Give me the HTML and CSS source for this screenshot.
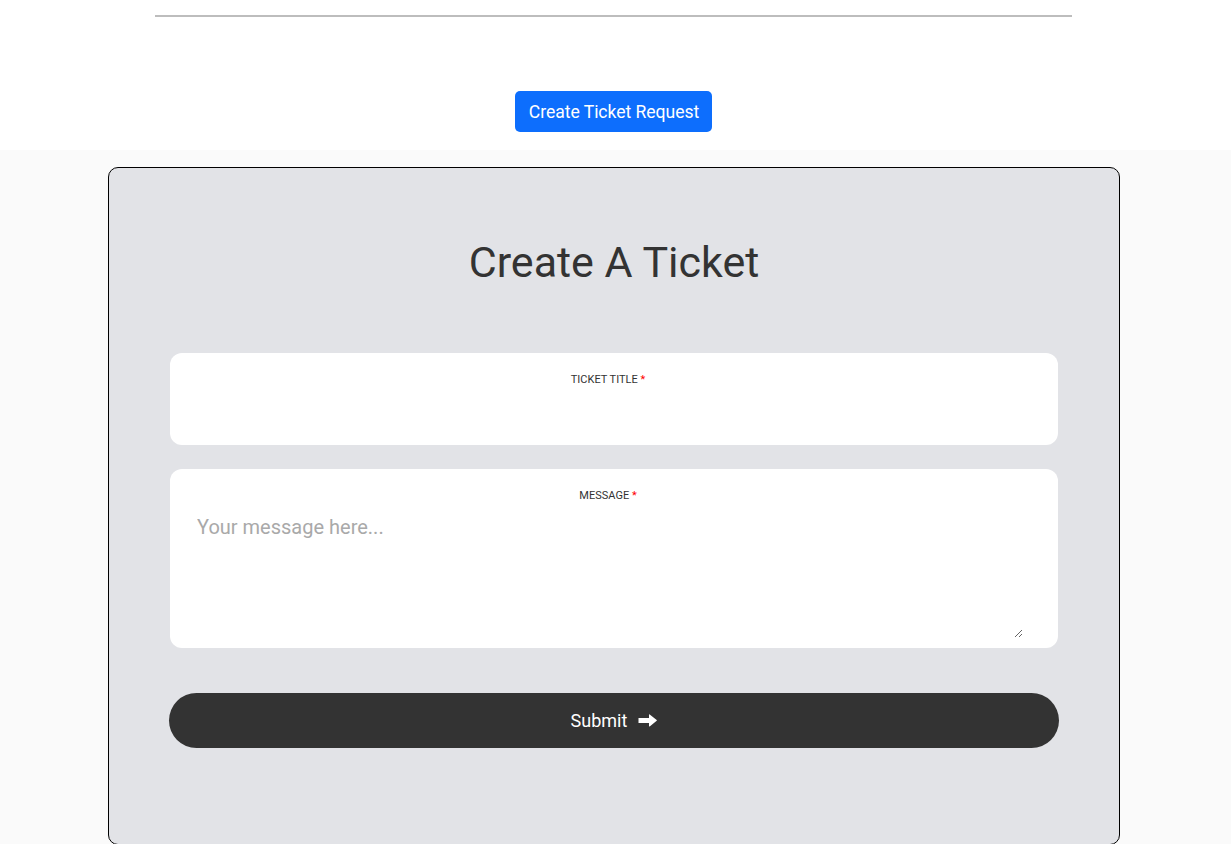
FILE: index.html
```html
<!DOCTYPE html>
<html lang="en">
<head>
<meta charset="utf-8">
<title>Create A Ticket</title>
<link rel="stylesheet" href="styles.css">
</head>
<body>
<header class="top">
  <div class="rule"></div>
  <button class="btn-primary" type="button">Create Ticket Request</button>
</header>
<main class="stage">
  <section class="card">
    <h1 class="card-title">Create A Ticket</h1>
    <form class="ticket-form">
      <div class="field field-title">
        <label class="field-label" for="title">TICKET TITLE <span class="req">*</span></label>
        <input class="field-input" id="title" type="text">
      </div>
      <div class="field field-message">
        <label class="field-label" for="msg">MESSAGE <span class="req">*</span></label>
        <textarea class="field-textarea" id="msg" placeholder="Your message here..."></textarea>
      </div>
      <button class="btn-submit" type="button">Submit
        <svg class="arrow" width="19" height="13" viewBox="0 0 19 13" aria-hidden="true"><path d="M0.5 4h10.5V0.8c0-0.4 0.4-0.6 0.7-0.4l7 5.6c0.3 0.2 0.3 0.6 0 0.8l-7 5.6c-0.3 0.2-0.7 0-0.7-0.4V9H0.5z" fill="#fff"/></svg>
      </button>
    </form>
  </section>
</main>
</body>
</html>
```
FILE: styles.css
```css
* { box-sizing: border-box; }
html, body { margin: 0; padding: 0; }
body {
  font-family: Roboto, "Liberation Sans", Arial, sans-serif;
  background: #fafafa;
  color: #333;
  overflow: hidden;
  height: 844px;
}
.top {
  background: #fff;
  height: 150px;
  display: flex;
  flex-direction: column;
  align-items: center;
  padding-top: 15px;
}
.rule {
  width: 917px;
  height: 2px;
  background: #bdbdbd;
  margin-right: 5px;
}
.btn-primary {
  margin-top: 74px;
  margin-right: 4px;
  height: 41px;
  padding: 0 13px 0 14px;
  border: none;
  border-radius: 5px;
  background: #0d6efd;
  color: #fff;
  font-family: Roboto, "Liberation Sans", Arial, sans-serif;
  font-size: 17.6px;
  letter-spacing: -0.05px;
}
.stage {
  padding-top: 17px;
  padding-right: 3px;
}
.card {
  width: 1012px;
  margin: 0 auto;
  background: #e2e3e7;
  border: 1px solid #000;
  border-radius: 10px;
  padding: 69px 61px 96px;
}
.card-title {
  margin: 0;
  text-align: center;
  font-size: 43px;
  line-height: 51px;
  font-weight: 400;
  color: #333;
}
.ticket-form {
  margin-top: 65px;
  display: flex;
  flex-direction: column;
}
.field {
  background: #fff;
  border-radius: 12px;
  display: flex;
  flex-direction: column;
  padding: 20px 27px 0;
}
.field + .field { margin-top: 24px; }
.field-message { padding-bottom: 10px; padding-right: 35px; }
.field-label {
  text-align: center;
  font-size: 11px;
  line-height: 13px;
  color: #333;
  padding-right: 12px;
}
.field-message .field-label { padding-right: 4px; }
.req { color: #ff0000; }
.field-input {
  border: none;
  outline: none;
  height: 59px;
  font-family: inherit;
  font-size: 20px;
  background: transparent;
}
.field-textarea {
  margin-top: 13px;
  height: 123px;
  border: none;
  outline: none;
  padding: 0;
  resize: vertical;
  font-family: Roboto, "Liberation Sans", Arial, sans-serif;
  font-size: 20px;
  color: #333;
  background: transparent;
}
.field-textarea::placeholder { color: #a9a9a9; }
.btn-submit {
  margin: 45px -1px 0;
  height: 55px;
  border: none;
  border-radius: 28px;
  background: #333;
  color: #fff;
  font-family: Roboto, "Liberation Sans", Arial, sans-serif;
  font-size: 18px;
  display: flex;
  align-items: center;
  justify-content: center;
  gap: 11px;
}
.arrow { display: block; }
```
